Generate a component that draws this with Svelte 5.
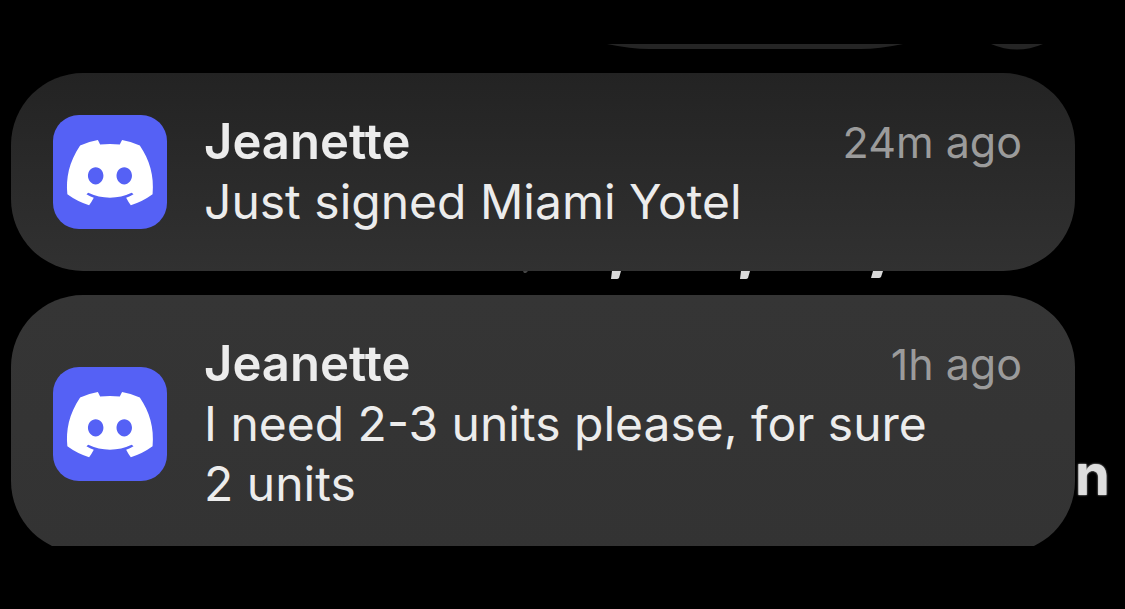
<script lang="ts">
    interface Notification {
        id: number;
        sender: string;
        time: string;
        text: string;
    }

    const notifications: Notification[] = [
        { id: 1, sender: 'Jeanette', time: '24m ago', text: 'Just signed Miami Yotel' },
        { id: 2, sender: 'Jeanette', time: '1h ago', text: 'I need 2-3 units please, for sure 2 units' }
    ];
</script>

<main class="screen">
    <!-- Bottom edges of the controls above the list -->
    <div class="controls" aria-hidden="true">
        <svg width="296" height="6" viewBox="0 0 296 6">
            <path d="M0 0H296Q272 5 254 5H42Q24 5 0 0Z" fill="#252525" />
        </svg>
        <svg width="52" height="6" viewBox="0 0 52 6">
            <path d="M0 0H52Q26 11 0 0Z" fill="#252525" />
        </svg>
    </div>

    <div class="list">
        {#each notifications as item (item.id)}
            <article class="card" class:older={item.id === 2}>
                <svg class="app-icon" viewBox="0 0 114 114" role="img" aria-label="Discord">
                    <rect width="114" height="114" rx="26" fill="#5561f5" />
                    <g transform="translate(14 25) scale(0.676)">
                        <path
                            fill="#fff"
                            d="M107.7,8.07A105.15,105.15,0,0,0,81.47,0a72.06,72.06,0,0,0-3.36,6.83A97.68,97.68,0,0,0,49,6.83,72.37,72.37,0,0,0,45.64,0,105.89,105.89,0,0,0,19.39,8.09C2.79,32.65-1.71,56.6.54,80.21h0A105.73,105.73,0,0,0,32.71,96.36,77.7,77.7,0,0,0,39.6,85.25a68.42,68.42,0,0,1-10.85-5.18c.91-.66,1.8-1.34,2.66-2a75.57,75.57,0,0,0,64.32,0c.87.71,1.76,1.39,2.66,2a68.68,68.68,0,0,1-10.87,5.19,77,77,0,0,0,6.89,11.1A105.25,105.25,0,0,0,126.6,80.22h0C129.24,52.84,122.09,29.11,107.7,8.07ZM42.45,65.69C36.18,65.69,31,60,31,53s5-12.74,11.43-12.74S54,46,53.89,53,48.84,65.69,42.45,65.69Zm42.24,0C78.41,65.69,73.25,60,73.25,53s5-12.74,11.44-12.74S96.23,46,96.12,53,91.08,65.69,84.69,65.69Z"
                        />
                    </g>
                </svg>
                <div class="body">
                    <header>
                        <h2>{item.sender}</h2>
                        <time>{item.time}</time>
                    </header>
                    <p>{item.text}</p>
                </div>
            </article>

            {#if item.id === 1}
                <!-- Tails of the line of text hidden behind the cards -->
                <div class="gap" aria-hidden="true">
                    <svg width="380" height="12" viewBox="0 0 380 12">
                        <path d="M2 0H7L5 2H3Z" fill="#444" />
                        <path
                            d="M91 0H100L98 7Q97 8 96 8H90Z M220 0H229L227 7Q226 8 225 8H219Z M352 0H362L360 6Q359 7 358 7H350Z"
                            fill="#d8d8d8"
                        />
                    </svg>
                </div>
            {/if}
        {/each}
        <span class="behind" aria-hidden="true">n</span>
    </div>
</main>

<style>
    :global(body) {
        margin: 0;
        background: #000;
    }

    .screen {
        box-sizing: border-box;
        min-height: 100vh;
        padding: 44px 50px 56px 11px;
        background: #000;
        color: #ececec;
        font-family: Inter, 'Liberation Sans', sans-serif;
    }

    .controls {
        display: flex;
        justify-content: flex-end;
        gap: 88px;
        height: 29px;
        padding-right: 32px;
    }

    .list {
        position: relative;
    }

    .card {
        display: flex;
        align-items: center;
        gap: 37px;
        box-sizing: border-box;
        padding: 39px 53px 39px 42px;
        border-radius: 72px;
        background: linear-gradient(#232323, #313131);
    }

    /* the last card slides under the bottom edge */
    .card.older {
        background: linear-gradient(#353535, #333);
        clip-path: inset(0 0 7px 0);
    }

    .app-icon {
        flex: none;
        width: 114px;
        height: 114px;
    }

    .body {
        flex: 1;
        min-width: 0;
    }

    header {
        display: flex;
        justify-content: space-between;
    }

    h2,
    p {
        margin: 0;
        line-height: 60px;
    }

    h2 {
        font-size: 49px;
        font-weight: 600;
    }

    p {
        max-width: 760px;
        font-size: 48px;
        font-weight: 400;
    }

    time {
        color: #9b9b9b;
        font-size: 43px;
        line-height: 60px;
    }

    .gap {
        display: flex;
        justify-content: flex-end;
        height: 24px;
        padding-right: 174px;
    }

    .behind {
        position: absolute;
        left: 100%;
        bottom: 48px;
        color: #dedede;
        font-size: 56px;
        font-weight: 700;
        line-height: 60px;
        text-shadow: 0 0 2px #dedede;
    }
</style>
